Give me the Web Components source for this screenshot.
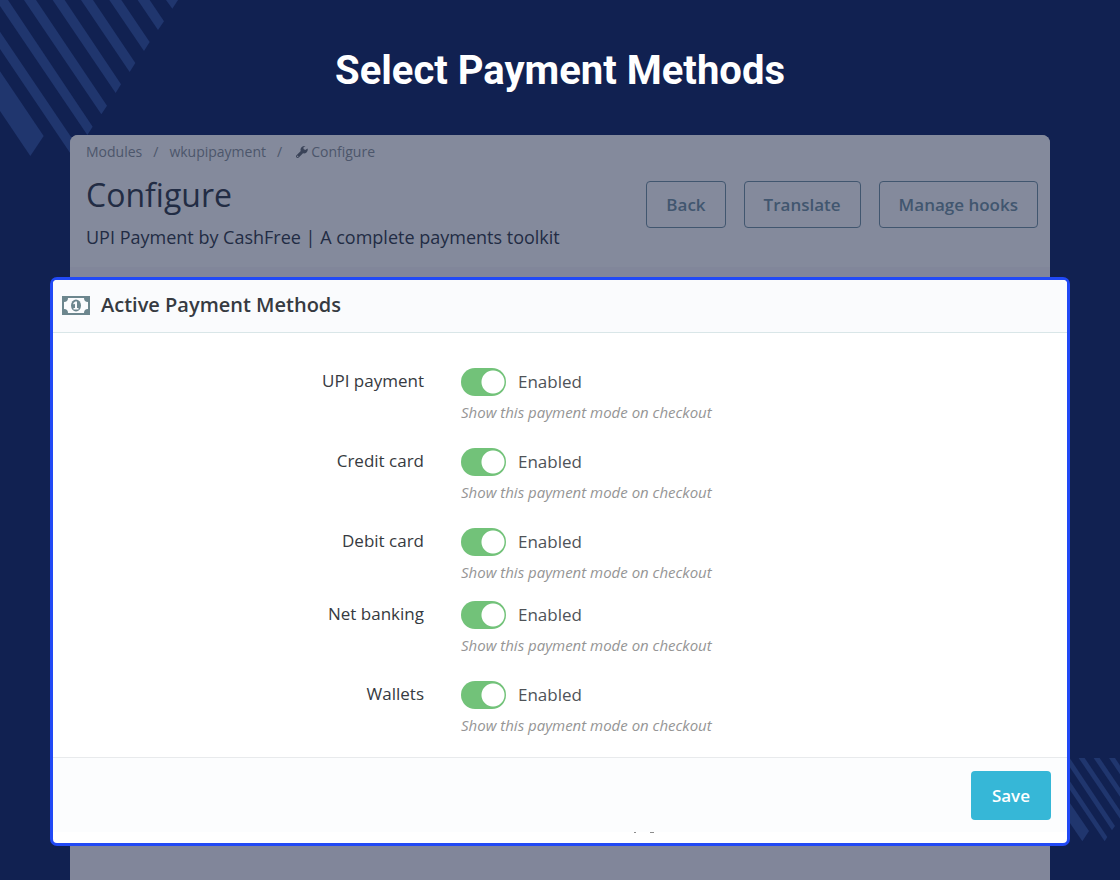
<!DOCTYPE html>
<html lang="en">
<head>
<meta charset="utf-8">
<meta name="viewport" content="width=device-width, initial-scale=1">
<title>Select Payment Methods</title>
<style>
  body {
    margin: 0;
    font-family: "Open Sans", "Liberation Sans", sans-serif;
    background: #112151;
  }
</style>
</head>
<body>

<promo-page>
  <span slot="title">Select Payment Methods</span>
  <module-header>
    <bread-crumbs slot="crumbs"></bread-crumbs>
    <span slot="title">Configure</span>
    <span slot="subtitle">UPI Payment by CashFree | A complete payments toolkit</span>
    <outline-button slot="actions">Back</outline-button>
    <outline-button slot="actions">Translate</outline-button>
    <outline-button slot="actions">Manage hooks</outline-button>
  </module-header>
  <settings-panel>
    <span slot="title">Active Payment Methods</span>
    <payment-switch label="UPI payment"></payment-switch>
    <payment-switch label="Credit card"></payment-switch>
    <payment-switch label="Debit card" compact></payment-switch>
    <payment-switch label="Net banking"></payment-switch>
    <payment-switch label="Wallets" compact></payment-switch>
    <save-button slot="footer">Save</save-button>
  </settings-panel>
</promo-page>

<script>
  class PromoPage extends HTMLElement {
    constructor() {
      super();
      const shadow = this.attachShadow({ mode: "open" });
      shadow.innerHTML = `
        <style>
          :host {
            display: flex;
            flex-direction: column;
            position: relative;
            min-height: 100vh;
            overflow: hidden;
          }

          .stripes {
            position: absolute;
            fill: #20366e;
          }

          .top {
            top: 0;
            left: 0;
          }

          .bottom {
            right: 0;
            bottom: 38px;
          }

          h1 {
            margin: 0;
            padding: 47px 0 40px;
            font: 700 40px/48px Roboto, "Liberation Sans", sans-serif;
            color: #fff;
            text-align: center;
            position: relative;
          }

          main {
            flex: 1;
            margin: 0 70px;
            padding-bottom: 34px;
            border-radius: 8px 8px 0 0;
            background: #81869a;
            position: relative;
          }
        </style>
        <svg class="stripes top" width="180" height="158" viewBox="0 0 540 474" aria-hidden="true">
          <path d="M0 214L131 408L91 468L0 333z"/>
          <path d="M0 95L235 443L218 470L0 147z"/>
          <path d="M-12 0H24L278 380L262 405z"/>
          <path d="M72 0H108L321 317L304 343z"/>
          <path d="M158 0H194L363 253L347 279z"/>
          <path d="M243 0H279L406 189L389 216z"/>
          <path d="M328 0H364L449 126L432 153z"/>
          <path d="M413 0H449L492 64L474 90z"/>
          <path d="M498 0H534L517 26z"/>
        </svg>
        <svg class="stripes bottom" width="60" height="84" viewBox="360 54 180 252" aria-hidden="true">
          <path d="M257 54H298L447 273L427 304z"/>
          <path d="M325 54H343L502 291L494 304z"/>
          <path d="M371 54H389L525 258L516 271z"/>
          <path d="M416 54H434L560 241V266z"/>
          <path d="M461 54H479L560 174V200z"/>
          <path d="M507 54H525L560 106V132z"/>
        </svg>
        <h1><slot name="title"></slot></h1>
        <main><slot></slot></main>
      `;
    }
  }

  class BreadCrumbs extends HTMLElement {
    constructor() {
      super();
      const shadow = this.attachShadow({ mode: "open" });
      shadow.innerHTML = `
        <style>
          :host {
            display: block;
            font-size: 14px;
            line-height: 20px;
            color: #4c566b;
          }

          nav {
            display: flex;
            gap: 11px;
          }

          a {
            color: inherit;
            text-decoration: none;
          }

          .current {
            display: flex;
            align-items: center;
            gap: 3px;
            padding-left: 3px;
          }

          svg {
            fill: #3a4358;
          }
        </style>
        <nav aria-label="Breadcrumb">
          <a href="#modules">Modules</a>
          <span>/</span>
          <a href="#wkupipayment">wkupipayment</a>
          <span>/</span>
          <a class="current" href="#configure"><svg width="12" height="12" viewBox="0 0 24 24" aria-hidden="true"><path d="M23 5L18.500 8L15 6V2.500L19 0C15 -0.500 11 1.500 9.500 5C8.800 7 9 8.500 9.500 10L1 18.500C-0.300 19.800 -0.300 21.700 1 23C2.300 24.300 4.200 24.300 5.500 23L14 14.500C18.500 15.800 23 12.500 23.500 8C23.600 7 23.400 6 23 5zM3.300 22A1.300 1.300 0 1 1 3.400 22z"/></svg>Configure</a>
        </nav>
      `;
    }
  }

  class ModuleHeader extends HTMLElement {
    constructor() {
      super();
      const shadow = this.attachShadow({ mode: "open" });
      shadow.innerHTML = `
        <style>
          :host {
            display: block;
            padding: 7px 12px 18px 16px;
            border-radius: 8px 8px 0 0;
            background: #848a9c;
          }

          .row {
            display: flex;
            justify-content: space-between;
            align-items: flex-start;
            padding-top: 11px;
          }

          h2 {
            margin: 0;
            font-size: 32px;
            line-height: 44px;
            font-weight: 400;
            color: #222c44;
          }

          p {
            margin: 8px 0 0;
            font-size: 18px;
            line-height: 24px;
            color: #222c44;
          }

          .actions {
            display: flex;
            gap: 18px;
            padding-top: 8px;
          }
        </style>
        <slot name="crumbs"></slot>
        <div class="row">
          <div>
            <h2><slot name="title"></slot></h2>
            <p><slot name="subtitle"></slot></p>
          </div>
          <div class="actions"><slot name="actions"></slot></div>
        </div>
      `;
    }
  }

  class OutlineButton extends HTMLElement {
    constructor() {
      super();
      const shadow = this.attachShadow({ mode: "open" });
      shadow.innerHTML = `
        <style>
          :host {
            display: block;
          }

          button {
            height: 47px;
            padding: 0 19px;
            border: 1px solid #41566f;
            border-radius: 4px;
            background: none;
            font: 600 17px/24px "Open Sans", "Liberation Sans", sans-serif;
            color: #41566f;
            cursor: pointer;
          }
        </style>
        <button type="button"><slot></slot></button>
      `;
    }
  }

  class SettingsPanel extends HTMLElement {
    constructor() {
      super();
      const shadow = this.attachShadow({ mode: "open" });
      shadow.innerHTML = `
        <style>
          :host {
            display: block;
            margin: 10px -20px 0;
            border: 3px solid #2149f5;
            border-radius: 7px;
            background: #fff;
          }

          header {
            display: flex;
            align-items: center;
            gap: 11px;
            height: 50px;
            padding: 0 9px 2px;
            border-bottom: 1px solid #d9e6e8;
            border-radius: 4px 4px 0 0;
            background: #fafbfd;
          }

          header svg {
            fill: #6c868e;
          }

          h3 {
            margin: 0;
            font-size: 20px;
            line-height: 28px;
            font-weight: 600;
            color: #363a41;
          }

          form {
            margin: 0;
          }

          .fields {
            display: flex;
            flex-direction: column;
            gap: 16px;
            padding: 33px 0 21px;
          }

          footer {
            display: flex;
            justify-content: flex-end;
            padding: 13px 16px 12px;
            border-top: 1px solid #e8eaec;
            background: #fcfdfe;
          }

          .edge {
            display: flex;
            justify-content: center;
            height: 11px;
            padding-left: 168px;
          }
        </style>
        <form>
          <header>
            <svg width="28" height="19" viewBox="0 0 28 19" aria-hidden="true">
              <path fill-rule="evenodd" d="M0 0H28V19H0zM6 2A4 4 0 0 1 2 6V13A4 4 0 0 1 6 17H22A4 4 0 0 1 26 13V6A4 4 0 0 1 22 2z"/>
              <ellipse cx="14" cy="9.500" rx="5" ry="6"/>
              <path fill="#fafbfd" d="M13.200 5.500H15V12H16.500V13.500H11.500V12H13V7.800L11.800 8.500L11.200 7.200z"/>
            </svg>
            <h3><slot name="title"></slot></h3>
          </header>
          <div class="fields"><slot></slot></div>
          <footer><slot name="footer"></slot></footer>
          <div class="edge">
            <svg width="20" height="2" viewBox="0 0 20 2" fill="#8d8d8d" aria-hidden="true">
              <path d="M0 0H2V1H0zM16 0H20V1H16z"/>
            </svg>
          </div>
        </form>
      `;
    }
  }

  class PaymentSwitch extends HTMLElement {
    constructor() {
      super();
      const shadow = this.attachShadow({ mode: "open" });
      shadow.innerHTML = `
        <style>
          :host {
            display: grid;
            grid-template-columns: 371fr 606fr;
            column-gap: 37px;
            padding-bottom: 8px;
          }

          :host([compact]) {
            padding-bottom: 1px;
          }

          label {
            font-size: 17px;
            line-height: 30px;
            color: #363a41;
            text-align: right;
          }

          .control {
            display: flex;
            align-items: center;
            gap: 12px;
            height: 32px;
          }

          input {
            appearance: none;
            width: 45px;
            height: 28px;
            margin: 0;
            border-radius: 14px;
            background: radial-gradient(circle at 14px 14px, #fff 11px, #c5ccd0 12px);
            cursor: pointer;
          }

          input:checked {
            background: radial-gradient(circle at 32px 14px, #fff 11px, #72c279 12px);
          }

          .state {
            font-size: 17px;
            line-height: 24px;
            color: #4f5358;
          }

          p {
            margin: 4px 0 0;
            font-size: 15px;
            line-height: 20px;
            font-style: italic;
            color: #959595;
          }
        </style>
        <label for="toggle"></label>
        <div>
          <div class="control">
            <input type="checkbox" role="switch" id="toggle" aria-describedby="hint" checked>
            <span class="state">Enabled</span>
          </div>
          <p id="hint">Show this payment mode on checkout</p>
        </div>
      `;

      const input = shadow.querySelector("input");
      const state = shadow.querySelector(".state");

      input.addEventListener("change", function () {
        state.textContent = input.checked ? "Enabled" : "Disabled";
      });
    }

    connectedCallback() {
      this.shadowRoot.querySelector("label").textContent = this.getAttribute("label");
    }
  }

  class SaveButton extends HTMLElement {
    constructor() {
      super();
      const shadow = this.attachShadow({ mode: "open" });
      shadow.innerHTML = `
        <style>
          :host {
            display: block;
          }

          button {
            height: 49px;
            padding: 0 21px;
            border: 0;
            border-radius: 4px;
            background: #36b7d7;
            font: 600 17px/24px "Open Sans", "Liberation Sans", sans-serif;
            color: #fff;
            cursor: pointer;
          }
        </style>
        <button type="button"><slot></slot></button>
      `;
    }
  }

  customElements.define("promo-page", PromoPage);
  customElements.define("bread-crumbs", BreadCrumbs);
  customElements.define("module-header", ModuleHeader);
  customElements.define("outline-button", OutlineButton);
  customElements.define("settings-panel", SettingsPanel);
  customElements.define("payment-switch", PaymentSwitch);
  customElements.define("save-button", SaveButton);
</script>
</body>
</html>
